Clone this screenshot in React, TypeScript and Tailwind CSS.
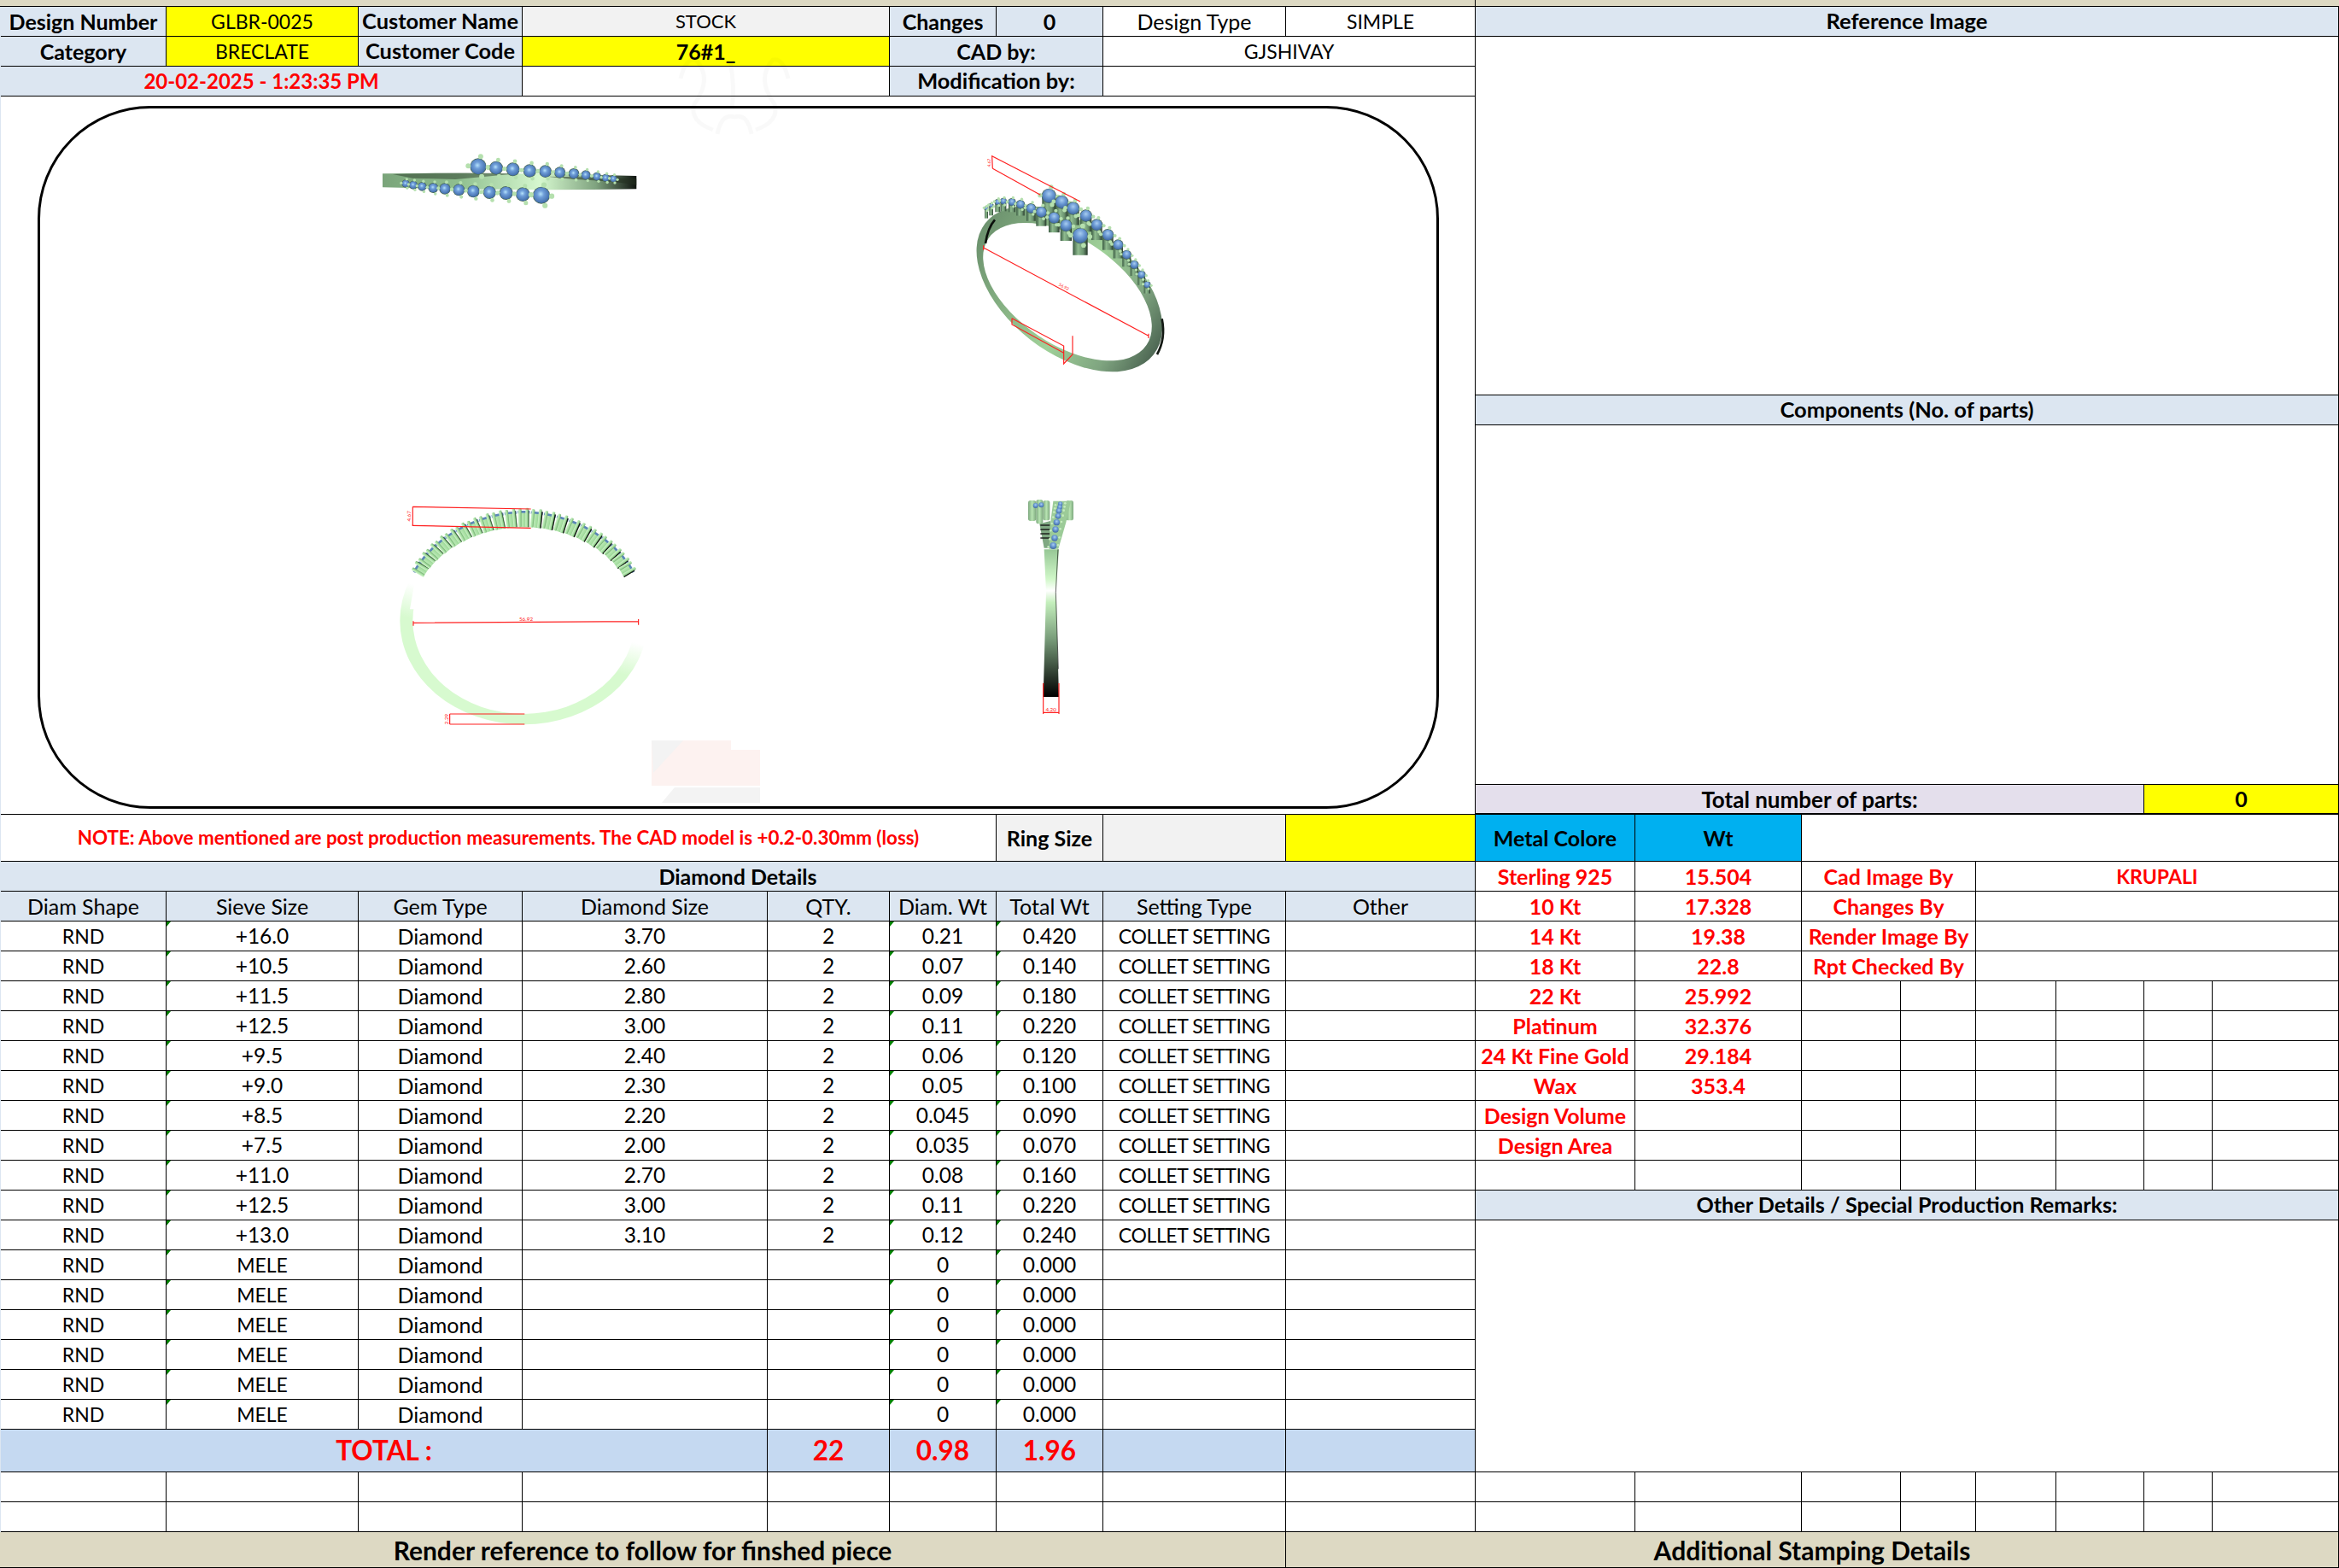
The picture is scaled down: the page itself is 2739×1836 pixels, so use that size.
import clsx from 'clsx'
import type { ReactNode } from 'react'

const LEFT_COLS = 'grid grid-cols-[194px_225px_192px_287px_143px_125px_125px_214px_222px]'
const RIGHT_COLS = 'grid grid-cols-[187px_195px_116px_88px_94px_103px_80px_148px]'

const diamonds = [
  ['+16.0', '3.70', '2', '0.21', '0.420'],
  ['+10.5', '2.60', '2', '0.07', '0.140'],
  ['+11.5', '2.80', '2', '0.09', '0.180'],
  ['+12.5', '3.00', '2', '0.11', '0.220'],
  ['+9.5', '2.40', '2', '0.06', '0.120'],
  ['+9.0', '2.30', '2', '0.05', '0.100'],
  ['+8.5', '2.20', '2', '0.045', '0.090'],
  ['+7.5', '2.00', '2', '0.035', '0.070'],
  ['+11.0', '2.70', '2', '0.08', '0.160'],
  ['+12.5', '3.00', '2', '0.11', '0.220'],
  ['+13.0', '3.10', '2', '0.12', '0.240'],
  ['MELE', '', '', '0', '0.000'],
  ['MELE', '', '', '0', '0.000'],
  ['MELE', '', '', '0', '0.000'],
  ['MELE', '', '', '0', '0.000'],
  ['MELE', '', '', '0', '0.000'],
  ['MELE', '', '', '0', '0.000'],
]

const metals = [
  ['Sterling 925', '15.504'],
  ['10 Kt', '17.328'],
  ['14 Kt', '19.38'],
  ['18 Kt', '22.8'],
  ['22 Kt', '25.992'],
  ['Platinum', '32.376'],
  ['24 Kt Fine Gold', '29.184'],
  ['Wax', '353.4'],
  ['Design Volume', ''],
  ['Design Area', ''],
  ['', ''],
]

const people = [
  ['Cad Image By', 'KRUPALI'],
  ['Changes By', ''],
  ['Render Image By', ''],
  ['Rpt Checked By', ''],
]

function Cell({ className, children }: { className?: string; children?: ReactNode }) {
  return (
    <div className={clsx('relative flex items-center justify-center overflow-visible whitespace-nowrap border-r border-b border-black', className)}>
      {children}
    </div>
  )
}

// the small green error marker excel puts in a cell corner
function Marker() {
  return <span className="absolute top-0 left-0 h-0 w-0 border-t-[6px] border-r-[5px] border-t-[#008000] border-r-transparent" />
}

function ellipse(cx: number, cy: number, a: number, b: number, deg: number) {
  const t = (deg * Math.PI) / 180
  const dx = a * Math.cos(t)
  const dy = a * Math.sin(t)
  return `M${cx - dx} ${cy - dy} a${a} ${b} ${deg} 1 0 ${2 * dx} ${2 * dy} a${a} ${b} ${deg} 1 0 ${-2 * dx} ${-2 * dy} Z`
}

function Stone({ x, y, r, id = 'stone' }: { x: number; y: number; r: number; id?: string }) {
  const p = r * 1.3
  const pr = Math.max(5, r * 0.33)
  return (
    <g>
      <circle cx={x} cy={y} r={r + 2} fill="#4a6a55" />
      <circle cx={x} cy={y} r={r} fill={`url(#${id})`} />
      <circle cx={x - p} cy={y - 2} r={pr} fill="#b5e0ae" />
      <circle cx={x + p * 0.25} cy={y - p} r={pr} fill="#b5e0ae" />
      <circle cx={x + p * 0.35} cy={y + p} r={pr} fill="#b5e0ae" />
      <circle cx={x + p} cy={y + 3} r={pr} fill="#b5e0ae" />
    </g>
  )
}

function TopView() {
  const upper = [
    [360, 105, 27], [423, 110, 22], [482, 115, 22], [541, 120, 21], [596, 122, 20], [647, 126, 18],
    [696, 130, 17], [738, 135, 15], [777, 140, 13], [808, 145, 12], [835, 148, 11],
  ]
  const lower = [
    [105, 165, 12], [132, 170, 13], [163, 175, 14], [202, 180, 16], [243, 183, 18], [292, 187, 19],
    [343, 192, 20], [400, 196, 21], [458, 198, 22], [517, 203, 23], [582, 206, 28],
  ]
  return (
    <g transform="translate(440 160) scale(0.3333)">
      <path d="M24 130 Q470 124 916 138 L916 184 Q500 192 24 178 Z" fill="url(#bandTop)" />
      <path d="M60 132 Q300 124 500 130 L280 150 L130 146 Z" fill="#1c2a1c" opacity="0.45" />
      <path d="M600 140 Q760 140 916 148 L916 170 Q840 156 700 150 Z" fill="#23301f" opacity="0.55" />
      {upper.map(([x, y, r]) => <Stone key={x} x={x} y={y} r={r} />)}
      {lower.map(([x, y, r]) => <Stone key={x} x={x} y={y} r={r} />)}
    </g>
  )
}

function PerspectiveView() {
  const back = [
    [385, 178, 24], [430, 200, 22], [470, 222, 21], [515, 248, 20], [553, 280, 19], [592, 315, 19],
    [628, 350, 17], [658, 385, 15], [685, 420, 14], [710, 455, 13], [730, 490, 11],
  ]
  const front = [
    [165, 222, 6], [182, 212, 7], [205, 200, 9], [225, 197, 10], [255, 200, 12], [285, 208, 14],
    [322, 222, 16], [358, 235, 18], [403, 255, 19], [445, 282, 20], [495, 318, 26],
  ]
  return (
    <g transform="translate(1100 170) scale(0.3333)">
      <path
        fillRule="evenodd"
        fill="url(#bandPersp)"
        d={`${ellipse(457, 505, 375, 225, 38)} ${ellipse(450, 515, 335, 185, 34)}`}
      />
      <path d="M195 262 Q170 290 162 345" fill="none" stroke="#0c100c" strokeWidth="8" />
      <path d="M782 610 Q796 680 765 735" fill="none" stroke="#141a14" strokeWidth="8" />
      {back.map(([x, y, r]) => (
        <g key={x}>
          <rect x={x - r} y={y} width={r * 2} height={r * 2.8} fill="url(#pillar)" />
          <Stone x={x} y={y} r={r} id="stoneSmall" />
        </g>
      ))}
      {front.map(([x, y, r]) => (
        <g key={x}>
          <rect x={x - r} y={y} width={r * 2} height={Math.max(35, r * 2.4 + 6)} fill="url(#pillar)" />
          <Stone x={x} y={y} r={r} id="stoneSmall" />
        </g>
      ))}
      <g fill="none" stroke="#ff2020" strokeWidth="3.5">
        <path d="M187 82 L185 38 L495 198 M187 82 L355 175" />
        <path d="M155 360 L735 670 M155 352 L155 368 M735 662 L735 678" />
        <path d="M255 608 L437 705 L437 768 L468 735 L468 670 M255 608 L255 630 L437 730" />
      </g>
      <text x="435" y="502" transform="rotate(28 435 502)" fontSize="15" fill="#ff2020" textAnchor="middle">56.92</text>
      <text x="180" y="62" transform="rotate(-88 180 62)" fontSize="15" fill="#ff2020" textAnchor="middle">4.67</text>
    </g>
  )
}

function FrontView() {
  // pillars follow the upper arc of the ring
  const pillars = Array.from({ length: 21 }, (_, i) => {
    const a = -1.03 + (i * 2.06) / 20
    const x = 640 + 400 * Math.sin(a)
    const y = 560 - 328 * Math.cos(a)
    const len = 66 - Math.abs(a) * 16
    const deg = (a * 180) / Math.PI
    return { x, y, len, deg, i }
  })
  return (
    <g transform="translate(400 540) scale(0.3333)">
      <path
        fillRule="evenodd"
        fill="url(#bandFront)"
        d="M205 560 a435 365 0 1 0 870 0 a435 365 0 1 0 -870 0 Z M250 560 a390 328 0 1 0 780 0 a390 328 0 1 0 -780 0 Z"
      />
      <path d="M640 235 Q820 250 1010 350 L1040 520 L240 520 L270 350 Q450 250 640 235 Z" fill="#ffffff" />
      {pillars.map((p) => (
        <g key={p.i} transform={`translate(${p.x} ${p.y}) rotate(${p.deg})`}>
          <rect x="-21" y={-p.len + 8} width="42" height="10" fill="#5a86b8" />
          <rect x="-19" y={-p.len + 16} width="38" height={p.len - 16} fill="url(#pillarFront)" />
          <rect x="-19" y={-p.len} width="11" height={p.len} rx="4" fill="url(#pillarFront)" />
          <rect x="6" y={-p.len - 2} width="11" height={p.len + 2} rx="4" fill="url(#pillarFront)" />
          <rect x="16" y={-p.len + 6} width={p.i > 10 ? 4 : 2} height={p.len - 6} fill={p.i > 10 ? '#111711' : '#2f4a30'} />
        </g>
      ))}
      <g fill="none" stroke="#ff2020" strokeWidth="3.5">
        <path d="M250 160 L665 168 M248 226 L665 235 M250 160 L250 226" />
        <path d="M252 568 L1043 563 M252 562 L252 578 M1043 555 L1043 575" />
        <path d="M380 888 L643 888 M380 924 L643 924 M380 888 L380 924" />
      </g>
      <text x="648" y="562" fontSize="19" fill="#ff2020" textAnchor="middle">56.92</text>
      <text x="244" y="193" transform="rotate(-90 244 193)" fontSize="19" fill="#ff2020" textAnchor="middle">4.67</text>
      <text x="376" y="906" transform="rotate(-90 376 906)" fontSize="19" fill="#ff2020" textAnchor="middle">2.29</text>
    </g>
  )
}

function SideView() {
  const chain = [[185, 60, 8], [183, 72, 9], [180, 85, 10], [177, 103, 10], [172, 125, 11], [168, 150, 11], [165, 180, 11], [160, 207, 12]]
  return (
    <g transform="translate(1180 570) scale(0.3333)">
      <path d="M128 220 L180 220 L170 370 L180 738 L125 738 L135 370 Z" fill="url(#bandSide)" />
      <path d="M177 220 L169 370 L178 640" fill="none" stroke="#1a1a1a" strokeWidth="2" />
      <rect x="72" y="48" width="28" height="72" rx="8" fill="url(#pillarLight)" />
      <rect x="100" y="45" width="24" height="85" rx="8" fill="url(#pillarLight)" />
      <rect x="124" y="48" width="24" height="70" rx="8" fill="url(#pillarLight)" />
      <rect x="205" y="48" width="26" height="70" rx="8" fill="url(#pillarLight)" />
      <path d="M112 130 L150 120 L150 215 L128 215 Z" fill="#7fa882" />
      {[135, 150, 165, 180].map((y) => (
        <path key={y} d="M115 0 L148 0" transform={`translate(0 ${y})`} stroke="#111" strokeWidth="4" />
      ))}
      <path d="M160 50 L222 50 L205 125 L178 218 L145 218 L150 130 Z" fill="#9ccb98" />
      <circle cx="98" cy="66" r="9" fill="url(#stoneSmall)" />
      <circle cx="118" cy="64" r="9" fill="url(#stoneSmall)" />
      {chain.map(([x, y, r]) => <circle key={y} cx={x} cy={y} r={r} fill="url(#stoneSmall)" />)}
      {chain.map(([x, y]) => (
        <g key={y} fill="#c5ecbe">
          <circle cx={x - 17} cy={y + 4} r="4" />
          <circle cx={x + 17} cy={y - 2} r="4" />
        </g>
      ))}
      <g fill="none" stroke="#ff2020" strokeWidth="3.5">
        <path d="M125 690 L125 798 M180 690 L180 798 M125 793 L180 793" />
      </g>
      <text x="152" y="788" fontSize="19" fill="#ff2020" textAnchor="middle">4.20</text>
    </g>
  )
}

function RingDrawing() {
  return (
    <svg viewBox="47 127 1635 817" className="h-full w-full overflow-visible">
      <defs>
        <radialGradient id="stone" cx="0.45" cy="0.42" r="0.6">
          <stop offset="0" stopColor="#b5e2fb" />
          <stop offset="0.35" stopColor="#6f9ed9" />
          <stop offset="1" stopColor="#3f6aa8" />
        </radialGradient>
        <radialGradient id="stoneSmall" cx="0.5" cy="0.35" r="0.6">
          <stop offset="0" stopColor="#a8cdf0" />
          <stop offset="0.5" stopColor="#6b99d4" />
          <stop offset="1" stopColor="#456fa8" />
        </radialGradient>
        <linearGradient id="bandTop" x1="0" y1="0" x2="1" y2="0">
          <stop offset="0" stopColor="#7aa47a" />
          <stop offset="0.3" stopColor="#8fbf8f" />
          <stop offset="0.62" stopColor="#d6f8cf" />
          <stop offset="0.84" stopColor="#7fa37f" />
          <stop offset="1" stopColor="#0f140f" />
        </linearGradient>
        <linearGradient id="bandPersp" gradientUnits="userSpaceOnUse" x1="125" y1="300" x2="790" y2="700">
          <stop offset="0" stopColor="#6a8f6c" />
          <stop offset="0.55" stopColor="#a0d199" />
          <stop offset="0.8" stopColor="#7fa580" />
          <stop offset="1" stopColor="#4a6250" />
        </linearGradient>
        <linearGradient id="bandFront" gradientUnits="userSpaceOnUse" x1="660" y1="540" x2="610" y2="730">
          <stop offset="0" stopColor="#ffffff" />
          <stop offset="0.6" stopColor="#d7facf" />
          <stop offset="1" stopColor="#d7facf" />
        </linearGradient>
        <linearGradient id="bandSide" x1="0" y1="0" x2="0" y2="1">
          <stop offset="0" stopColor="#96c795" />
          <stop offset="0.2" stopColor="#d0f7c8" />
          <stop offset="0.28" stopColor="#ffffff" />
          <stop offset="0.36" stopColor="#c4efbc" />
          <stop offset="0.6" stopColor="#7b9f7c" />
          <stop offset="0.85" stopColor="#2d3b2e" />
          <stop offset="1" stopColor="#000000" />
        </linearGradient>
        <linearGradient id="pillar" x1="0" y1="0" x2="1" y2="0">
          <stop offset="0" stopColor="#3a5a42" />
          <stop offset="0.35" stopColor="#8fbb8f" />
          <stop offset="0.7" stopColor="#6c9470" />
          <stop offset="1" stopColor="#26382b" />
        </linearGradient>
        <linearGradient id="pillarLight" x1="0" y1="0" x2="1" y2="0">
          <stop offset="0" stopColor="#7da87e" />
          <stop offset="0.5" stopColor="#b8e4b2" />
          <stop offset="1" stopColor="#7da87e" />
        </linearGradient>
        <linearGradient id="pillarFront" x1="0" y1="0" x2="1" y2="0">
          <stop offset="0" stopColor="#d0f3ca" />
          <stop offset="0.55" stopColor="#a6dfa1" />
          <stop offset="1" stopColor="#74ae72" />
        </linearGradient>
      </defs>
      <path d="M763 867 L856 867 L856 878 L890 878 L890 920 L763 920 Z" fill="#fdf2f0" />
      <path d="M763 867 L800 867 L765 905 Z M775 940 L890 940 L890 922 L790 922 Z" fill="#f3f3f3" />
      <TopView />
      <PerspectiveView />
      <FrontView />
      <SideView />
    </svg>
  )
}

function DiamondTable() {
  return (
    <>
      <div className={clsx(LEFT_COLS, 'h-[35px] bg-[#dce6f1]')}>
        {['Diam Shape', 'Sieve Size', 'Gem Type', 'Diamond Size', 'QTY.', 'Diam. Wt', 'Total Wt', 'Setting Type', 'Other'].map((h) => (
          <Cell key={h}>{h}</Cell>
        ))}
      </div>
      {diamonds.map((d, i) => (
        <div key={i} className={clsx(LEFT_COLS, 'h-[35px] text-[24.5px]')}>
          <Cell className="text-[23px]">RND</Cell>
          <Cell className={d[0] === 'MELE' ? 'text-[23px]' : ''}><Marker />{d[0]}</Cell>
          <Cell className="text-[25px]">Diamond</Cell>
          <Cell>{d[1]}</Cell>
          <Cell>{d[2]}</Cell>
          <Cell><Marker />{d[3]}</Cell>
          <Cell><Marker />{d[4]}</Cell>
          <Cell className="text-[23px] tracking-[-0.4px]">{d[1] ? 'COLLET SETTING' : ''}</Cell>
          <Cell />
        </div>
      ))}
      <div className={clsx(LEFT_COLS, 'h-[50px] bg-[#c5d9f1] text-[31.5px] font-bold text-[#ff0000]')}>
        <Cell className="col-span-4">TOTAL :</Cell>
        <Cell>22</Cell>
        <Cell>0.98</Cell>
        <Cell>1.96</Cell>
        <Cell />
        <Cell />
      </div>
      {[0, 1].map((i) => (
        <div key={i} className={clsx(LEFT_COLS, 'h-[35px]')}>
          {Array.from({ length: 9 }, (_, j) => <Cell key={j} />)}
        </div>
      ))}
    </>
  )
}

function LeftPanel() {
  return (
    <div className="flex w-[1728px] flex-col border-l border-l-[#dce6f1]">
      <div className={clsx(LEFT_COLS, 'h-[35px]')}>
        <Cell className="bg-[#dce6f1] font-bold">Design Number</Cell>
        <Cell className="bg-[#ffff00] text-[23px]">GLBR-0025</Cell>
        <Cell className="bg-[#dce6f1] text-[25.4px] font-bold">Customer Name</Cell>
        <Cell className="col-span-2 bg-[#f2f2f2] text-[22px]">STOCK</Cell>
        <Cell className="bg-[#dce6f1] font-bold">Changes</Cell>
        <Cell className="bg-[#dce6f1] font-bold">0</Cell>
        <Cell>Design Type</Cell>
        <Cell className="text-[23px]">SIMPLE</Cell>
      </div>
      <div className={clsx(LEFT_COLS, 'h-[35px]')}>
        <Cell className="bg-[#dce6f1] font-bold">Category</Cell>
        <Cell className="bg-[#ffff00] text-[23px]">BRECLATE</Cell>
        <Cell className="bg-[#dce6f1] text-[25.4px] font-bold">Customer Code</Cell>
        <Cell className="col-span-2 bg-[#ffff00] font-bold">76#1_</Cell>
        <Cell className="col-span-2 bg-[#dce6f1] font-bold">CAD by:</Cell>
        <Cell className="col-span-2 text-[23px]">GJSHIVAY</Cell>
      </div>
      <div className={clsx(LEFT_COLS, 'h-[35px]')}>
        <Cell className="col-span-3 bg-[#dce6f1] text-[24px] font-bold text-[#ff0000]">20-02-2025 - 1:23:35 PM</Cell>
        <Cell className="col-span-2" />
        <Cell className="col-span-2 bg-[#dce6f1] text-[25.4px] font-bold">Modification by:</Cell>
        <Cell className="col-span-2" />
      </div>

      {/* Render sheet */}
      <div className="h-[841px] border-r border-b border-black pt-[11px] pr-[42px] pb-[6px] pl-[43px]">
        <div className="h-full rounded-[132px] border-[3px] border-black">
          <RingDrawing />
        </div>
      </div>

      <div className={clsx(LEFT_COLS, 'h-[55px]')}>
        <Cell className="col-span-6 text-[22.4px] font-bold text-[#ff0000]">
          NOTE: Above mentioned are post production measurements. The CAD model is +0.2-0.30mm (loss)
        </Cell>
        <Cell className="bg-[#f2f2f2] font-bold">Ring Size</Cell>
        <Cell className="bg-[#f2f2f2]" />
        <Cell className="bg-[#ffff00]" />
      </div>
      <Cell className="h-[35px] bg-[#dce6f1] font-bold">Diamond Details</Cell>
      <DiamondTable />
    </div>
  )
}

function RightPanel() {
  return (
    <div className="flex w-[1011px] flex-col">
      <Cell className="h-[35px] bg-[#dce6f1] text-[25.5px] font-bold">Reference Image</Cell>
      <Cell className="h-[420px]" />
      <Cell className="h-[35px] bg-[#dce6f1] text-[25.5px] font-bold">Components (No. of parts)</Cell>
      <Cell className="h-[421px]" />
      <div className="grid h-[35px] grid-cols-[783px_228px] font-bold">
        <Cell className="border-b-2 bg-[#e4dfec] text-[26px]">Total number of parts:</Cell>
        <Cell className="border-b-2 bg-[#ffff00]">0</Cell>
      </div>
      <div className={clsx(RIGHT_COLS, 'h-[55px] font-bold')}>
        <Cell className="bg-[#00b0f0]">Metal Colore</Cell>
        <Cell className="bg-[#00b0f0]">Wt</Cell>
        <Cell className="col-span-6" />
      </div>
      {metals.map(([name, wt], i) => (
        <div key={i} className={clsx(RIGHT_COLS, 'h-[35px] font-bold text-[#ff0000]')}>
          <Cell>{name}</Cell>
          <Cell>{wt}</Cell>
          {i < people.length ? (
            <>
              <Cell className="col-span-2">{people[i][0]}</Cell>
              <Cell className="col-span-4 text-[23px]">{people[i][1]}</Cell>
            </>
          ) : (
            Array.from({ length: 6 }, (_, j) => <Cell key={j} />)
          )}
        </div>
      ))}
      <Cell className="h-[35px] bg-[#dce6f1] text-[25.2px] font-bold">Other Details / Special Production Remarks:</Cell>
      <Cell className="h-[295px]" />
      {[0, 1].map((i) => (
        <div key={i} className={clsx(RIGHT_COLS, 'h-[35px]')}>
          {Array.from({ length: 8 }, (_, j) => <Cell key={j} />)}
        </div>
      ))}
    </div>
  )
}

export default function App() {
  return (
    <div className="relative h-[1836px] w-[2739px] overflow-hidden bg-white [font-family:Lato,sans-serif] text-[25px] leading-none text-black">
      {/* Top strip */}
      <div className="grid h-[8px] grid-cols-[1728px_1011px] bg-[#ddd9c3]">
        <div className="border-r border-b border-black" />
        <div className="border-b border-black" />
      </div>

      <div className="flex">
        <LeftPanel />
        <RightPanel />
      </div>

      {/* Bottom headings */}
      <div className="grid h-[42px] grid-cols-[1506px_1233px] bg-[#ddd9c3] text-[30px] font-bold">
        <Cell>Render reference to follow for finshed piece</Cell>
        <Cell>Additional Stamping Details</Cell>
      </div>

      {/* Faint sheet watermark */}
      <svg viewBox="0 0 150 100" className="pointer-events-none absolute top-[62px] left-[785px] h-[100px] w-[150px]">
        <g fill="none" stroke="#000000" strokeOpacity="0.025" strokeWidth="5">
          <path d="M12 30 Q18 5 30 8 Q50 30 28 60 Q22 80 50 90" />
          <path d="M138 30 Q132 5 120 8 Q100 30 122 60 Q128 80 100 90" />
          <path d="M55 95 Q60 70 75 75 Q90 70 95 95" />
          <path d="M70 10 Q76 40 72 65" />
        </g>
      </svg>
    </div>
  )
}
